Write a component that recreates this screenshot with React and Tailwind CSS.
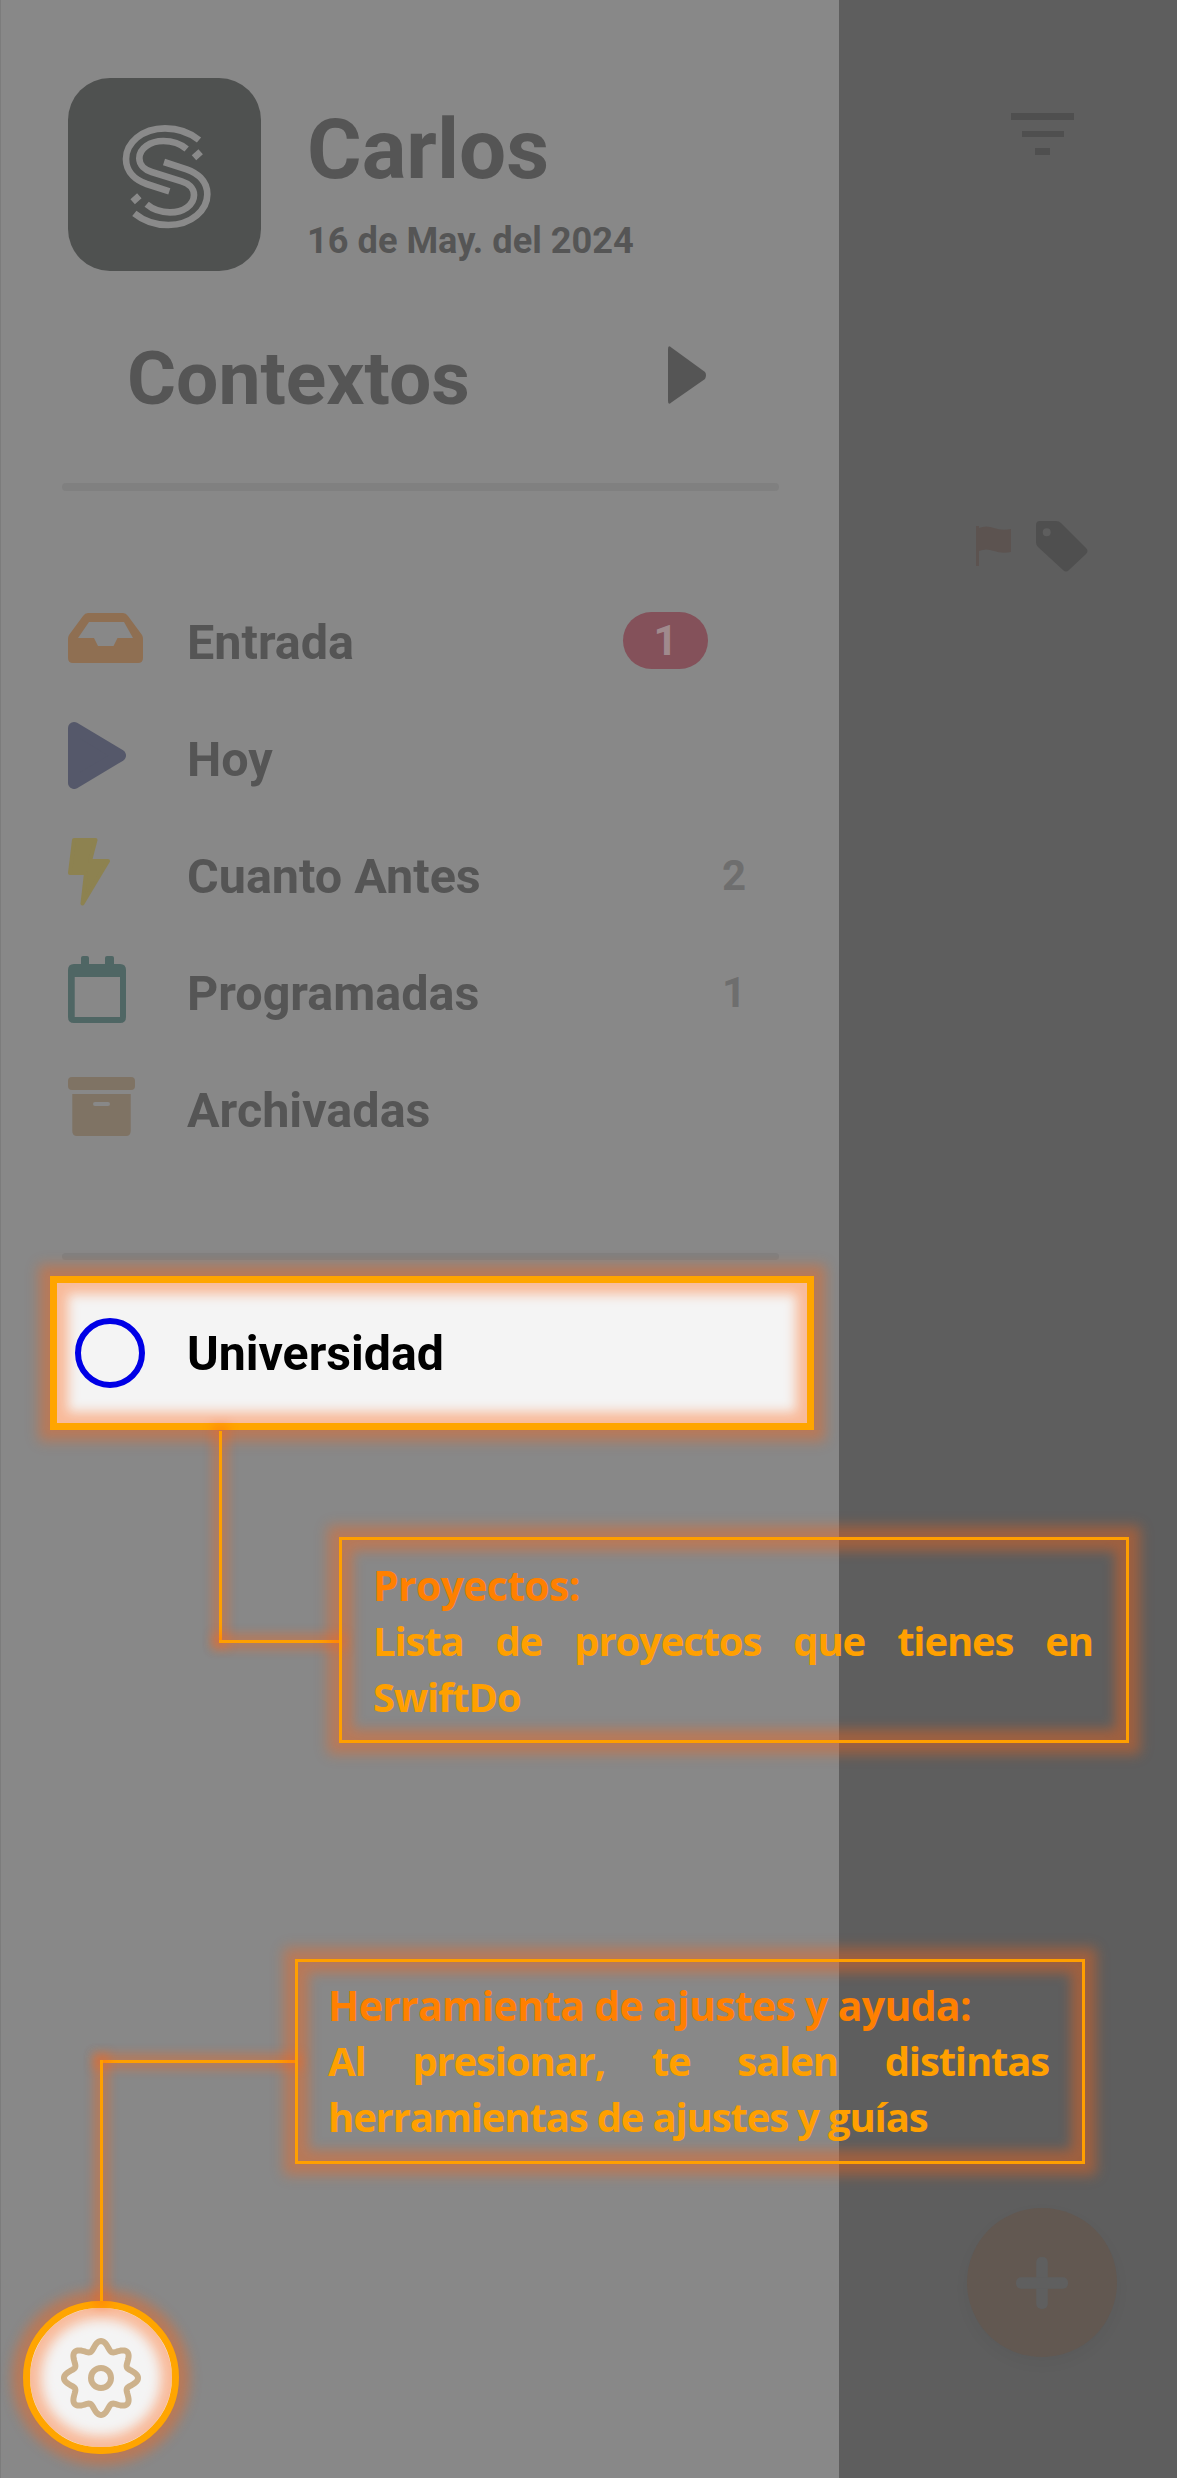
import React from "react";

const roboto = "font-['Roboto',sans-serif]";
const glow = "shadow-[0_0_12px_11px_rgba(255,100,20,0.4),inset_0_0_12px_11px_rgba(255,100,20,0.4)]";
const lineGlow = "shadow-[0_0_10px_7px_rgba(255,100,20,0.34)]";

const gearPath = (() => {
  const pts = [];
  for (let i = 0; i < 240; i++) {
    const t = (i / 240) * Math.PI * 2;
    const r = 32.5 + 4.5 * Math.cos(8 * t);
    pts.push(`${(40 + r * Math.cos(t)).toFixed(2)} ${(40 + r * Math.sin(t)).toFixed(2)}`);
  }
  return `M${pts.join(" L")}Z`;
})();

function Logo() {
  return (
    <svg viewBox="54 54 579 579" className="h-[193px] w-[193px]" fill="none" stroke="#8a8a8a" strokeWidth="20">
      <path d="M447 240 C425 222 392 205 345 205 C275 205 228 250 228 297 C228 340 262 362 290 372 L358 394" />
      <path d="M253 460 C275 478 308 495 355 495 C425 495 472 450 472 403 C472 360 438 338 410 328 L342 306" />
      <path d="M410 267 C390 250 370 243 340 243 C300 243 268 265 268 295 C268 315 285 330 305 336 L395 364 C415 370 432 385 432 405 C432 435 400 457 360 457 C330 457 310 450 290 433" />
      <path d="M432 293 L452 275 M248 425 L268 407" />
    </svg>
  );
}

function Row({ icon, label, right }) {
  return (
    <div className="flex h-[117.1px] items-center pl-[67px]">
      <div className="mb-[10px] w-[119px] shrink-0">{icon}</div>
      <span className="text-[48.5px] font-bold leading-none text-[#555555]">{label}</span>
      {right}
    </div>
  );
}

const Count = ({ n }) => (
  <span className="mb-[2px] ml-auto mr-[95px] w-[22px] text-center text-[42px] font-bold leading-none text-[#6e6e6e]">{n}</span>
);

function Callout({ className, title, lines }) {
  return (
    <div className={`absolute border-[3px] border-[#ff9f00] font-['Open_Sans',sans-serif] font-bold leading-[56px] ${glow} ${className}`}>
      <div className="text-[41px] tracking-[-0.7px] text-[#ff8000]">{title}</div>
      <div className="text-justify text-[40px] tracking-[-1.15px] text-[#ffa000]">{lines}</div>
    </div>
  );
}

export default function App() {
  return (
    <div className={`relative flex h-[2478px] w-full overflow-hidden bg-[#5e5e5e] ${roboto}`}>
      <aside className="flex h-full w-[839px] shrink-0 flex-col border-l border-[#7c7c7c] bg-[#888888]">
        <div className="flex items-start pl-[67px] pt-[78px]">
          <div className="h-[193px] w-[193px] overflow-hidden rounded-[42px] bg-[#4f5150]">
            <Logo />
          </div>
          <div className="ml-[46px] pt-[26px]">
            <div className="text-[83.5px] font-bold leading-[92px] text-[#555555]">Carlos</div>
            <div className="mt-[25px] text-[36.2px] font-bold leading-[40px] text-[#555555]">16 de May. del 2024</div>
          </div>
        </div>
        <div className="flex items-center pl-[126px] pt-[57px]">
          <span className="text-[75px] font-bold leading-[100px] text-[#555555]">Contextos</span>
          <svg viewBox="0 0 38 58" className="mb-[6px] ml-[198px] h-[58px] w-[38px]" fill="#555555">
            <path d="M0 3 Q0 -2 4 2 L37 26 Q39 29 37 33 L4 56 Q0 60 0 55Z" />
          </svg>
        </div>
        <div className="ml-[61px] mt-[55px] h-[8px] w-[717px] rounded-sm bg-[#808080]" />
        <div className="mt-[93.5px]">
          <Row
            label="Entrada"
            icon={
              <svg viewBox="0 0 75 50" className="h-[50px] w-[75px]" fill="#8f6f52" fillRule="evenodd">
                <path d="M20 0 H55 Q58 0 60 3 L74 22 Q75 24 75 26 V45 Q75 50 70 50 H5 Q0 50 0 45 V26 Q0 24 1 22 L15 3 Q17 0 20 0Z M21 9 L10 25 H26 L30 33 H45.5 L49.5 25 H65 L56 9Z" />
              </svg>
            }
            right={
              <span className="mb-[6px] ml-auto mr-[131px] flex h-[57px] w-[85px] items-center justify-center rounded-full bg-[#84515a] text-[42px] font-bold text-[#a08a8d]">1</span>
            }
          />
          <Row
            label="Hoy"
            icon={
              <svg viewBox="0 0 58 67" className="h-[67px] w-[58px]" fill="#55586a" stroke="#55586a" strokeWidth="12" strokeLinejoin="round">
                <path d="M6 6 L52 33.5 L6 61Z" />
              </svg>
            }
          />
          <Row
            label="Cuanto Antes"
            right={<Count n="2" />}
            icon={
              <svg viewBox="0 0 42 68" className="h-[68px] w-[42px]" fill="#8d8250" stroke="#8d8250" strokeWidth="4" strokeLinejoin="round">
                <path d="M6 2 H27.5 L22 23 H40 L14.5 65.5 L18 35 H2Z" />
              </svg>
            }
          />
          <Row
            label="Programadas"
            right={<Count n="1" />}
            icon={
              <svg viewBox="0 0 58 67" className="h-[67px] w-[58px]" fill="#4f6664" fillRule="evenodd">
                <path d="M13 2 Q13 0 15 0 H19 Q21 0 21 2 V8 H37 V2 Q37 0 39 0 H44 Q46 0 46 2 V8 H52 Q58 8 58 14 V61 Q58 67 52 67 H6 Q0 67 0 61 V14 Q0 8 6 8 H13Z M6.7 21 V61 H52 V21Z" />
              </svg>
            }
          />
          <Row
            label="Archivadas"
            icon={
              <svg viewBox="0 0 67 59" className="h-[59px] w-[67px]" fill="#7f7364" fillRule="evenodd">
                <path d="M4 0 H63 Q67 0 67 4 V9 Q67 13 63 13 H4 Q0 13 0 9 V4 Q0 0 4 0Z" />
                <path d="M4.3 17 H62.7 V54 Q62.7 59 58 59 H9 Q4.3 59 4.3 54Z M27 25 Q25 25 25 27 Q25 29 27 29 H40 Q42 29 42 27 Q42 25 40 25Z" />
              </svg>
            }
          />
        </div>
        <div className="ml-[61px] mt-[83.5px] h-[7px] w-[717px] rounded-sm bg-[#808080]" />
        <div className={`relative ml-[49px] mt-[16px] flex h-[154px] w-[764px] shrink-0 items-center border-[7px] border-[#ffa500] bg-[#f4f4f4] pl-[18px] ${glow}`}>
          <span className="h-[70px] w-[70px] shrink-0 rounded-full border-[6px] border-[#0000e6]" />
          <span className="ml-[42px] mt-[2px] text-[48.2px] font-bold leading-none text-black">Universidad</span>
        </div>
        <div className={`relative ml-[22px] mb-[24px] mt-auto flex h-[153px] w-[156px] items-center justify-center rounded-full border-[7px] border-[#ffa500] bg-[#f4f4f4] ${glow}`}>
          <svg viewBox="0 0 80 80" className="h-[80px] w-[80px]" fill="none" stroke="#cdb28c" strokeWidth="6">
            <path d={gearPath} />
            <circle cx="40" cy="40" r="10" />
          </svg>
        </div>
      </aside>

      <main className="relative flex-1">
        <svg viewBox="0 0 63 42" className="ml-[172px] mt-[113px] h-[42px] w-[63px]" fill="#4f4f4f">
          <rect x="0" y="0" width="63" height="7" />
          <rect x="11" y="18" width="42" height="6" />
          <rect x="24" y="35" width="15" height="7" />
        </svg>
        <div className="ml-[137px] mt-[366px] flex items-start gap-[25px]">
          <svg viewBox="0 0 35 40" className="mt-[5px] h-[40px] w-[35px]" fill="#5c5350">
            <path d="M0 0 H3 V40 H0Z M3 2 Q10 -1 18 2 Q26 5 35 3 V26 Q26 28 18 25 Q10 22 3 25Z" />
          </svg>
          <svg viewBox="0 0 53 52" className="h-[52px] w-[53px]" fill="#4f4f4f" fillRule="evenodd">
            <path d="M4 0 H20 Q23 0 25 2 L50 27 Q53 30 50 33 L33 49 Q30 52 27 49 L2 26 Q0 24 0 21 V4 Q0 0 4 0Z M10.7 7.3 A4 4 0 1 0 10.7 15.3 A4 4 0 1 0 10.7 7.3Z" />
          </svg>
        </div>
        <div className="absolute left-[128px] top-[2208px] flex h-[149px] w-[150px] items-center justify-center rounded-full bg-[#625851] shadow-[0_6px_16px_rgba(0,0,0,0.04)]">
          <svg viewBox="0 0 52 52" className="h-[52px] w-[52px]" fill="#5f5f5f">
            <rect x="20.25" y="0" width="11.5" height="52" rx="5" />
            <rect x="0" y="20.25" width="52" height="11.5" rx="5" />
          </svg>
        </div>
      </main>

      <div className={`absolute left-[219px] top-[1431px] h-[210px] w-[3px] bg-[#ff9f00] ${lineGlow}`} />
      <div className={`absolute left-[219px] top-[1640px] h-[3px] w-[120px] bg-[#ff9f00] ${lineGlow}`} />
      <div className={`absolute left-[100px] top-[2060px] h-[3px] w-[195px] bg-[#ff9f00] ${lineGlow}`} />
      <div className={`absolute left-[100px] top-[2060px] h-[241px] w-[3px] bg-[#ff9f00] ${lineGlow}`} />

      <Callout
        className="left-[339px] top-[1537px] h-[206px] w-[790px] pl-[31px] pr-[33px] pt-[17px]"
        title="Proyectos:"
        lines="Lista de proyectos que tienes en SwiftDo"
      />
      <Callout
        className="left-[295px] top-[1959px] h-[205px] w-[790px] pl-[30px] pr-[33px] pt-[15px]"
        title="Herramienta de ajustes y ayuda:"
        lines="Al presionar, te salen distintas herramientas de ajustes y guías"
      />
    </div>
  );
}
